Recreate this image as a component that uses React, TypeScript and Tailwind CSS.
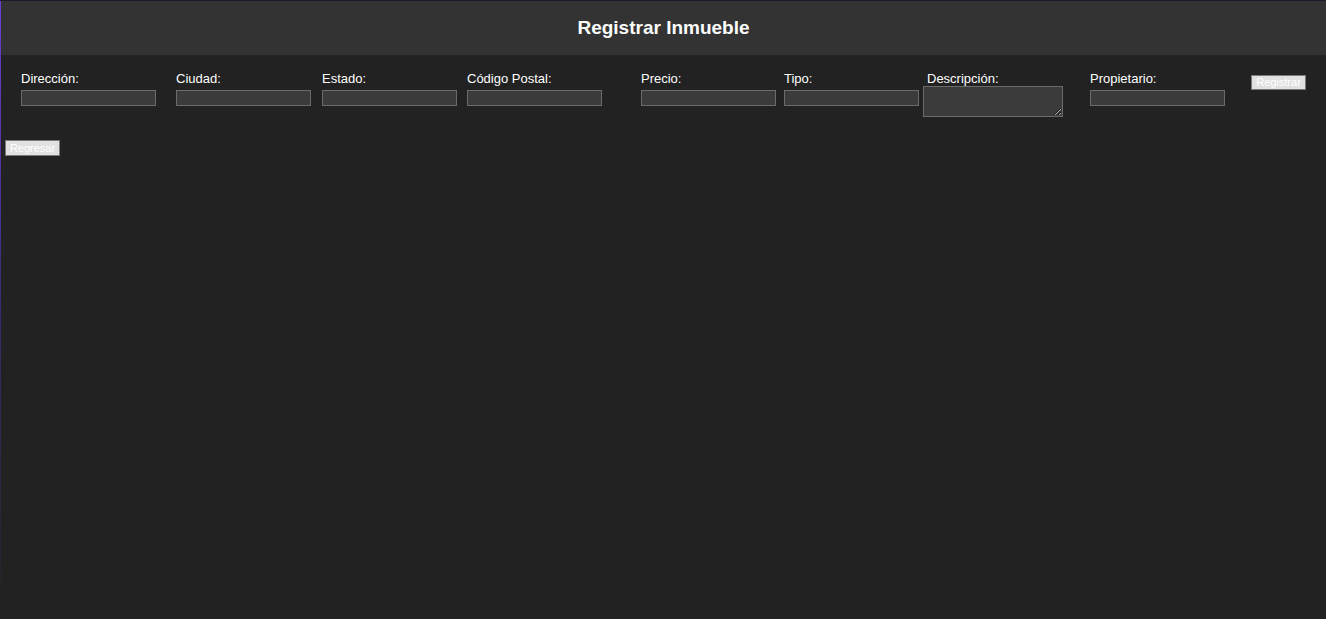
import React from "react";

const fields = [
  { label: "Dirección:", ml: "ml-[20px]" },
  { label: "Ciudad:", ml: "ml-[20px]" },
  { label: "Estado:", ml: "ml-[11px]" },
  { label: "Código Postal:", ml: "ml-[10px]" },
  { label: "Precio:", ml: "ml-[39px]" },
  { label: "Tipo:", ml: "ml-[8px]" },
];

export default function App() {
  return (
    <div className="h-[619px] flex flex-col bg-[#222222] font-['Liberation_Sans',Arial,sans-serif] text-white">
      <div className="h-px bg-[#1b1930]" />
      <div className="flex flex-1">
        {/* purple left edge */}
        <div className="w-px bg-gradient-to-b from-[#6c3fd6] via-[#3a2a70] to-[#222222]" />
        <div className="flex-1 flex flex-col">
          <header className="h-[54px] bg-[#333333] flex items-center justify-center">
            <h1 className="text-[19px] font-bold leading-[23px] -mt-[2px]">Registrar Inmueble</h1>
          </header>

          <form className="flex items-start pt-[16px] text-[13px] leading-[15px]">
            {fields.map((f) => (
              <div key={f.label} className={`flex flex-col w-[135px] ${f.ml}`}>
                <label className="mb-[4px] whitespace-nowrap">{f.label}</label>
                <input
                  type="text"
                  className="h-[16px] w-[135px] bg-[#3b3b3b] border border-[#6b6b6b] outline-none"
                />
              </div>
            ))}

            <div className="flex flex-col w-[140px] ml-[4px]">
              <label className="ml-[4px] whitespace-nowrap">Descripción:</label>
              <textarea className="h-[31px] w-[140px] bg-[#3b3b3b] border border-[#6b6b6b] outline-none resize block" />
            </div>

            <div className="flex flex-col w-[135px] ml-[27px]">
              <label className="mb-[4px] whitespace-nowrap">Propietario:</label>
              <input
                type="text"
                className="h-[16px] w-[135px] bg-[#3b3b3b] border border-[#6b6b6b] outline-none"
              />
            </div>

            <button
              type="button"
              className="ml-[26px] mt-[4px] h-[15px] w-[55px] bg-[#e0e0e0] border border-[#7a7a7a] text-white text-[11px] leading-[13px]"
            >
              Registrar
            </button>
          </form>

          <div className="flex pl-[4px] pt-[23px]">
            <button
              type="button"
              className="h-[16px] w-[55px] bg-[#e0e0e0] border border-[#7a7a7a] text-white text-[11px] leading-[14px]"
            >
              Regresar
            </button>
          </div>
        </div>
      </div>
    </div>
  );
}
